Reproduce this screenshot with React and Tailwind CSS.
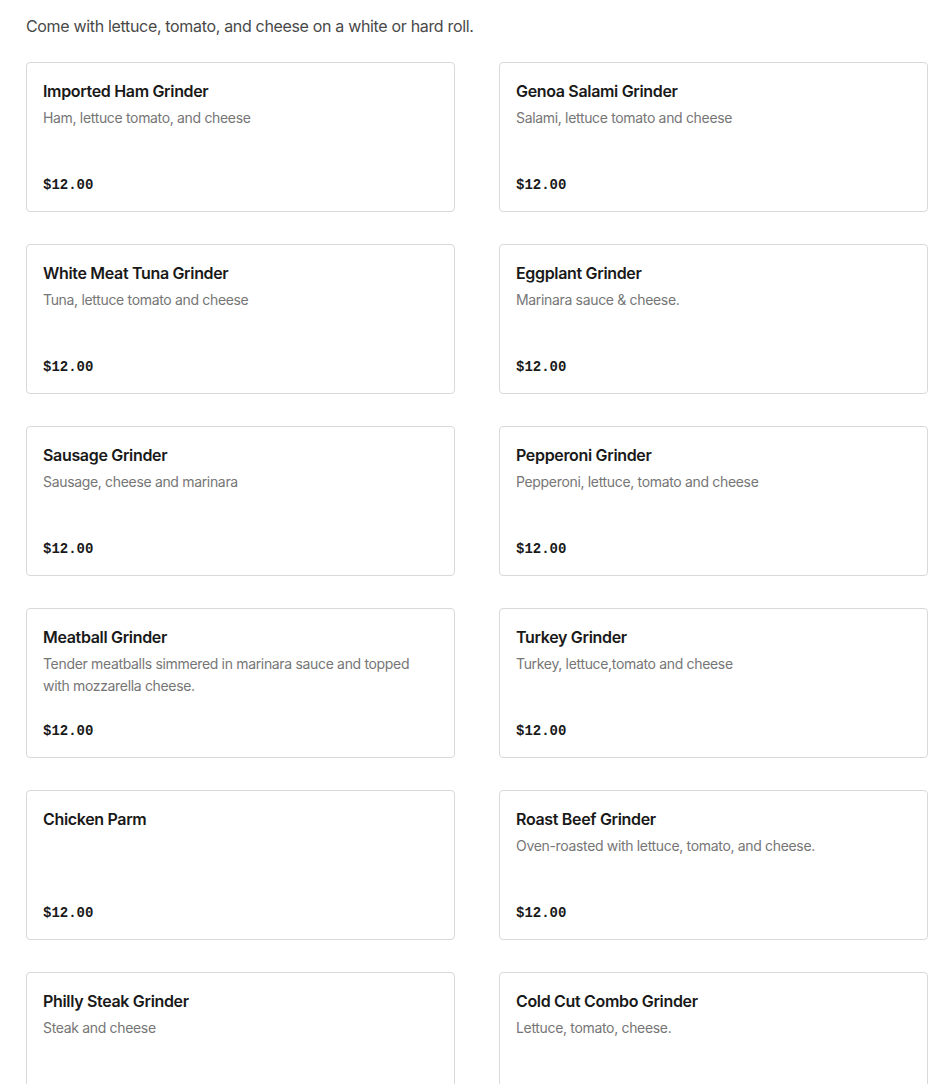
import React from 'react';

const items = [
  { name: 'Imported Ham Grinder', desc: 'Ham, lettuce tomato, and cheese' },
  { name: 'Genoa Salami Grinder', desc: 'Salami, lettuce tomato and cheese' },
  { name: 'White Meat Tuna Grinder', desc: 'Tuna, lettuce tomato and cheese' },
  { name: 'Eggplant Grinder', desc: 'Marinara sauce & cheese.' },
  { name: 'Sausage Grinder', desc: 'Sausage, cheese and marinara' },
  { name: 'Pepperoni Grinder', desc: 'Pepperoni, lettuce, tomato and cheese' },
  {
    name: 'Meatball Grinder',
    desc: 'Tender meatballs simmered in marinara sauce and topped with mozzarella cheese.',
  },
  { name: 'Turkey Grinder', desc: 'Turkey, lettuce,tomato and cheese' },
  { name: 'Chicken Parm', desc: '' },
  { name: 'Roast Beef Grinder', desc: 'Oven-roasted with lettuce, tomato, and cheese.' },
  { name: 'Philly Steak Grinder', desc: 'Steak and cheese' },
  { name: 'Cold Cut Combo Grinder', desc: 'Lettuce, tomato, cheese.' },
];

const MenuCard = ({ item }) => (
  <div className="h-[150px] flex flex-col border border-[#d9d9d9] rounded-[4px] bg-white p-4">
    <h3 className="text-[16px] leading-6 font-semibold text-[#191919]">{item.name}</h3>
    {item.desc && (
      <p className="mt-1 text-[14px] leading-[22px] text-[#767676]">{item.desc}</p>
    )}
    <div className="mt-auto text-[14px] leading-5 font-bold tracking-normal text-[#191919] font-['Liberation_Mono',monospace]">
      $12.00
    </div>
  </div>
);

export default function App() {
  return (
    <div className="min-h-screen bg-white font-['Inter',sans-serif] tracking-[-0.33px] pl-[26px] pr-[22px] pt-[14px] pb-10">
      <p className="text-[16px] leading-6 text-[#494949]">
        Come with lettuce, tomato, and cheese on a white or hard roll.
      </p>
      <div className="mt-6 grid grid-cols-2 gap-x-[44px] gap-y-[32px]">
        {items.map((item) => (
          <MenuCard key={item.name} item={item} />
        ))}
      </div>
    </div>
  );
}
